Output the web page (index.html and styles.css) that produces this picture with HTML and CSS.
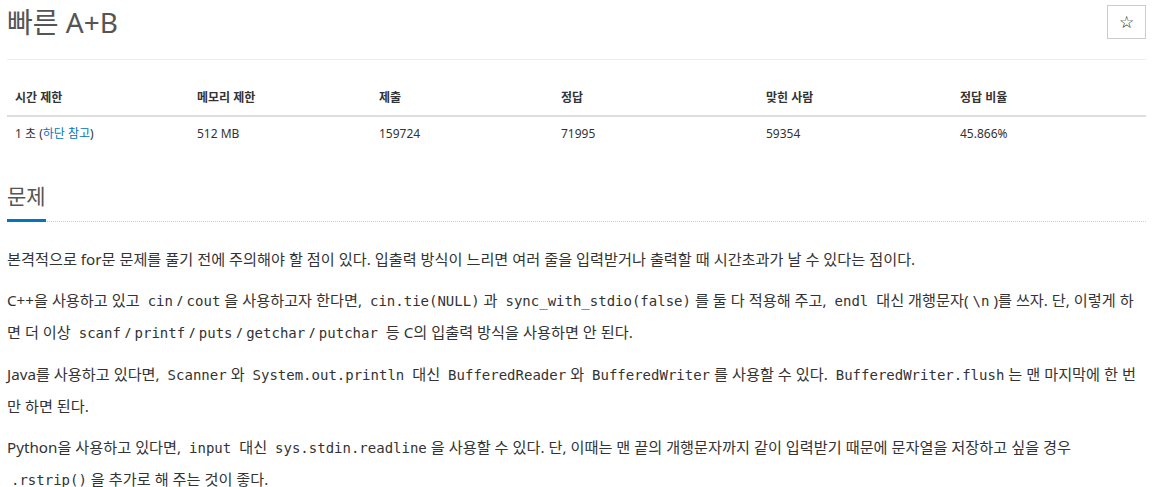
FILE: index.html
```html
<!DOCTYPE html>
<html lang="ko">
<head>
  <meta charset="UTF-8">
  <title>빠른 A+B</title>
  <link rel="stylesheet" href="styles.css">
</head>
<body>

<div class="container">
  <div class="page-header">
    <h1 class="problem_title">빠른 A+B</h1>
    <button type="button" class="btn_star">☆</button>
  </div>

  <!-- 제한 / 통계 -->
  <table class="problem_info">
    <colgroup>
      <col class="c_time">
      <col class="c_memory">
      <col class="c_submit">
      <col class="c_ac">
      <col class="c_user">
      <col class="c_rate">
    </colgroup>
    <thead>
      <tr>
        <th>시간 제한</th>
        <th>메모리 제한</th>
        <th>제출</th>
        <th>정답</th>
        <th>맞힌 사람</th>
        <th>정답 비율</th>
      </tr>
    </thead>
    <tbody>
      <tr>
        <td>1 초 (<a href="#limit">하단 참고</a>)</td>
        <td>512 MB</td>
        <td>159724</td>
        <td>71995</td>
        <td>59354</td>
        <td>45.866%</td>
      </tr>
    </tbody>
  </table>

  <!-- 문제 -->
  <section class="headline">
    <h2><span>문제</span></h2>
  </section>

  <div class="problem_text">
    <p>본격적으로 for문 문제를 풀기 전에 주의해야 할 점이 있다. 입출력 방식이 느리면 여러 줄을 입력받거나 출력할 때 시간초과가 날 수 있다는 점이다.</p>
    <p>C++을 사용하고 있고 <code>cin</code>/<code>cout</code>을 사용하고자 한다면, <code>cin.tie(NULL)</code>과 <code>sync_with_stdio(false)</code>를 둘 다 적용해 주고, <code>endl</code> 대신 개행문자(<code>\n</code>)를 쓰자. 단, 이렇게 하면 더 이상 <code>scanf</code>/<code>printf</code>/<code>puts</code>/<code>getchar</code>/<code>putchar</code> 등 C의 입출력 방식을 사용하면 안 된다.</p>
    <p>Java를 사용하고 있다면, <code>Scanner</code>와 <code>System.out.println</code> 대신 <code>BufferedReader</code>와 <code>BufferedWriter</code>를 사용할 수 있다. <code>BufferedWriter.flush</code>는 맨 마지막에 한 번만 하면 된다.</p>
    <p>Python을 사용하고 있다면, <code>input</code> 대신 <code>sys.stdin.readline</code>을 사용할 수 있다. 단, 이때는 맨 끝의 개행문자까지 같이 입력받기 때문에 문자열을 저장하고 싶을 경우 <code>.rstrip()</code>을 추가로 해 주는 것이 좋다.</p>
  </div>
</div>

</body>
</html>
```

FILE: styles.css
```css
body { margin: 0; font-family: "Noto Sans", "Noto Sans CJK KR", sans-serif; font-size: 15.2px; color: #333; background: #fff; }
.container { padding: 0 6px 0 7px; }
a { color: #0076c0; text-decoration: none; }

.page-header { display: flex; justify-content: space-between; align-items: flex-start; padding: 4px 0 19px; border-bottom: 1px solid #eee; }
.problem_title { margin: 0; font-size: 28px; font-weight: 400; line-height: 36px; color: #555; }
.btn_star { width: 39px; height: 34px; margin-top: 1px; padding: 0; border: 1px solid #ccc; background: #fff; font-size: 17px; line-height: 1; color: #222; font-family: "DejaVu Sans", sans-serif; }

.problem_info { width: 100%; margin: 21px 0 30px; border-collapse: collapse; table-layout: fixed; font-size: 12px; }
.problem_info .c_time, .problem_info .c_memory, .problem_info .c_submit { width: 182px; }
.problem_info .c_ac { width: 205px; }
.problem_info .c_user { width: 194px; }
.problem_info th, .problem_info td { padding: 8px; text-align: left; line-height: 18px; }
.problem_info th { border-bottom: 2px solid #ddd; font-weight: 700; }

.headline { border-bottom: 1px dotted #ccc; }
.headline h2 { margin: 0; font-size: 21px; font-weight: 400; line-height: 30px; color: #555; }
.headline span { display: inline-block; padding-bottom: 8px; border-bottom: 3px solid #0076c0; margin-bottom: -1px; }

.problem_text { padding-top: 22px; word-break: break-all; }
.problem_text p { margin: 0 0 10px; line-height: 31px; }
code { font-family: "DejaVu Sans Mono", monospace; font-size: 14px; padding: 0 4px; white-space: nowrap; }
```
